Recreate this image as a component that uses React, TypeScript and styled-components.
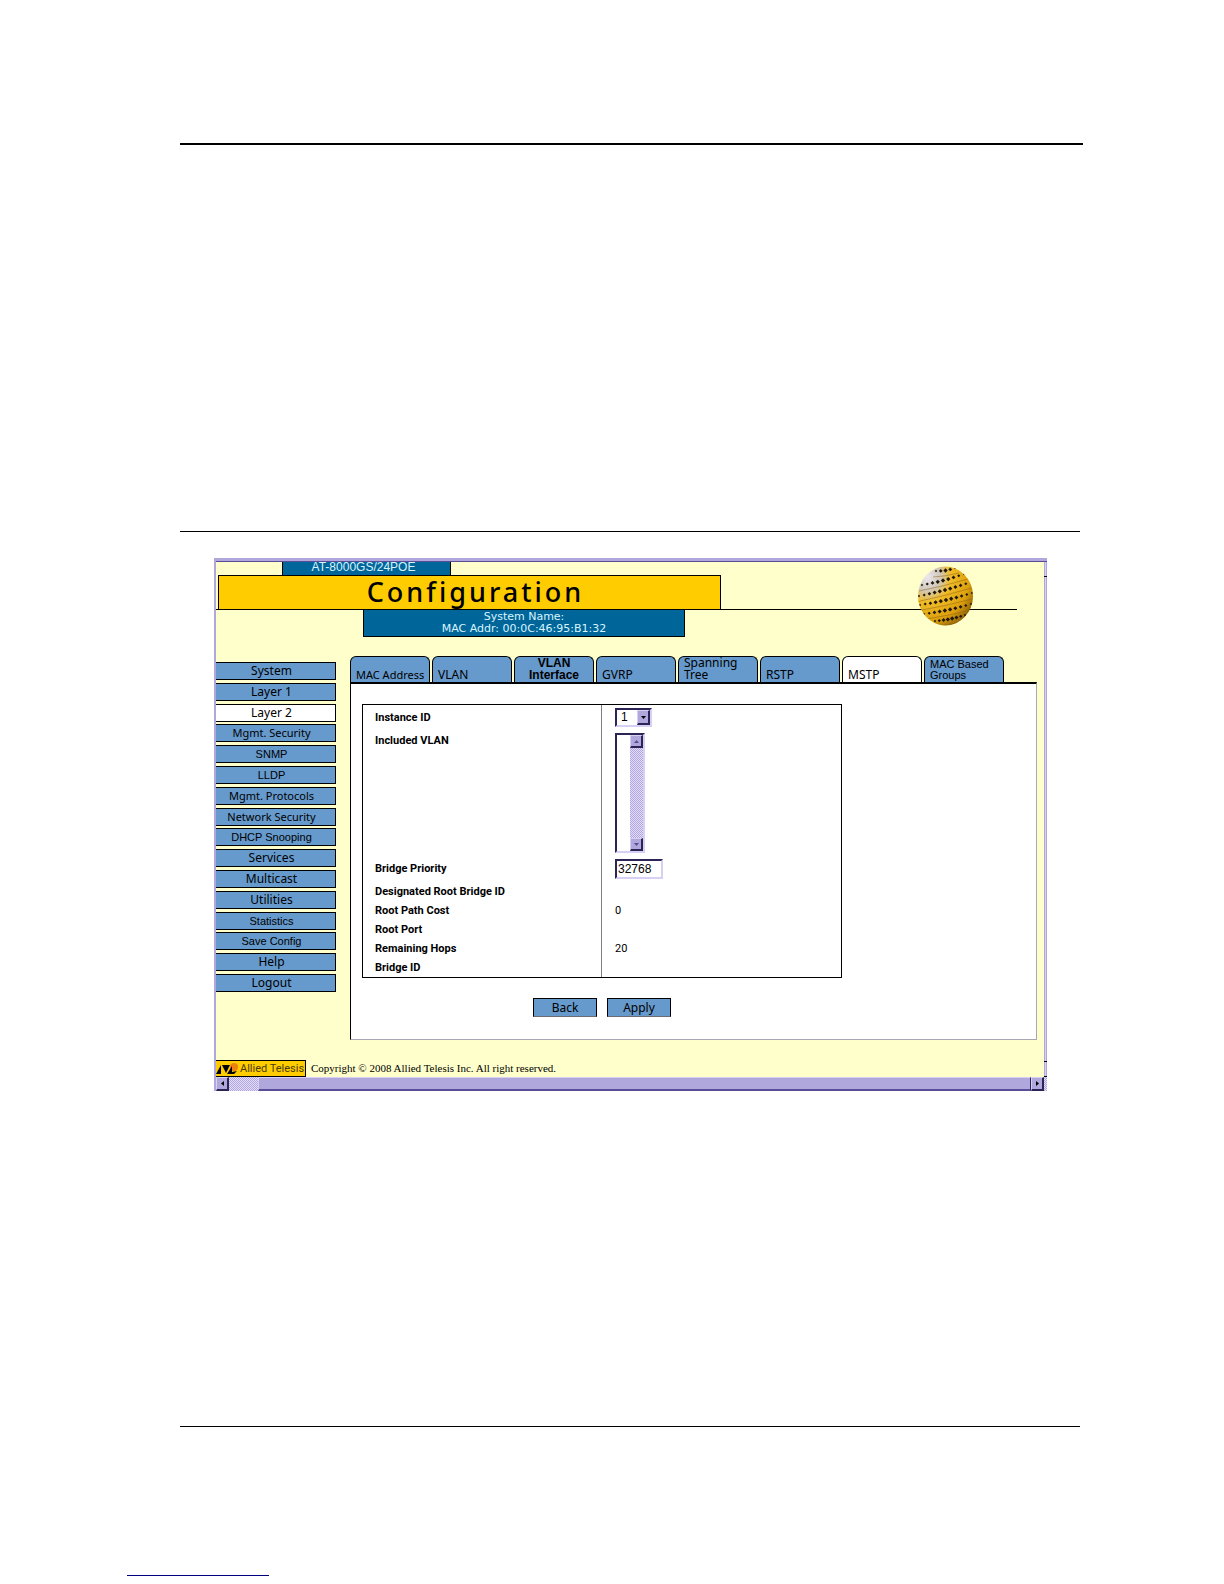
import React, { useState } from "react";
import styled, { createGlobalStyle, css } from "styled-components";

const color = {
  cream: "#ffffcc",
  gold: "#ffcc00",
  teal: "#006699",
  blue: "#6699cc",
  lilac: "#b0a8dc",
  lilacLight: "#d8d0f4",
  lilacDark: "#5a4c96",
  shadow: "#2c2454",
  paleText: "#d8f4ff",
};
const verdana = `"DejaVu Sans", Verdana, sans-serif`;
const humanist = `"Noto Sans", Verdana, sans-serif`;
const arial = `"Liberation Sans", Arial, sans-serif`;
const compact = `Roboto, "Liberation Sans", sans-serif`;

const GlobalStyle = createGlobalStyle`
  * { box-sizing: border-box; }
  body { margin: 0; background: #fff; color: #000; font-family: ${arial}; }
  button, input, select { font: inherit; color: inherit; border-radius: 0; margin: 0; }
`;

const Page = styled.div`
  padding: 143px 0 8px;
`;
const Rule = styled.hr`
  margin: 0 144px 0 180px;
  border: 0;
  height: 1px;
  background: #000;
`;
const TopRule = styled(Rule)`
  height: 2px;
  margin-right: 141px;
`;
const SectionRule = styled(Rule)`
  margin-top: 386px;
`;
const EndRule = styled(Rule)`
  margin-top: 335px;
`;
const Browser = styled.div`
  margin: 26px 177px 0 214px;
  border-top: 3px solid ${color.lilac};
  border-left: 2px solid ${color.lilac};
`;
const Viewport = styled.div`
  display: flex;
  border-top: 1px solid ${color.lilacDark};
`;
const Screen = styled.div`
  flex: 1;
  min-width: 0;
  background: ${color.cream};
`;
const SideScroll = styled.div`
  width: 3px;
  background: linear-gradient(90deg, ${color.lilac} 1px, ${color.lilacLight} 1px 2px, ${color.lilac} 2px);
  border-bottom: 1px solid #000;
  display: flex;
  flex-direction: column;
  justify-content: space-between;
  &::before {
    content: "";
    height: 14px;
    border-bottom: 1px solid #000;
  }
  &::after {
    content: "";
    height: 14px;
    border-top: 1px solid #000;
  }
`;

const Header = styled.header`
  position: relative;
  padding-right: 27px;
`;
const Model = styled.div`
  width: 169px;
  height: 13px;
  margin-left: 66px;
  padding-right: 6px;
  background: ${color.teal};
  border: solid #000;
  border-width: 0 1px;
  color: ${color.paleText};
  font-size: 12px;
  line-height: 10px;
  text-align: center;
`;
const TitleLine = styled.div`
  border-bottom: 1px solid #000;
`;
const Title = styled.h1`
  margin: 0 0 0 2px;
  width: 503px;
  height: 34px;
  padding-left: 12px;
  border: solid #000;
  border-width: 1px 1px 0;
  background: ${color.gold};
  font: 500 27px/32px ${humanist};
  letter-spacing: 3px;
  text-align: center;
`;
const SystemInfo = styled.div`
  width: 322px;
  height: 27px;
  margin-left: 147px;
  padding: 1px 0;
  border: solid #000;
  border-width: 0 1px 1px;
  background: ${color.teal};
  color: ${color.paleText};
  font: 11px/12px ${verdana};
  text-align: center;
`;
const Globe = styled.svg`
  position: absolute;
  right: 70px;
  top: 4px;
  width: 57px;
  height: 60px;
`;

const Body = styled.div`
  display: flex;
  gap: 14px;
  padding: 19px 7px 0 0;
  align-items: flex-start;
`;
const SideNav = styled.nav`
  flex: none;
  width: 120px;
  height: 330px;
  margin-top: 6px;
  display: flex;
  flex-direction: column;
  justify-content: space-between;
`;
type Face = "normal" | "long" | "arial";
const navFont: Record<Face, string> = {
  normal: `12px/16px ${humanist}`,
  long: `11px/16px ${humanist}`,
  arial: `11px/16px ${arial}`,
};
const NavLink = styled.a<{ $active?: boolean; $face: Face }>`
  height: 18px;
  padding-right: 8px;
  border: solid #000;
  border-width: 1px 1px 1px 0;
  background: ${(p) => (p.$active ? "#fff" : color.blue)};
  color: #000;
  font: ${(p) => navFont[p.$face]};
  text-align: center;
  text-decoration: none;
  white-space: nowrap;
`;

const Main = styled.div`
  flex: 1;
  min-width: 0;
`;
const Tabs = styled.nav`
  display: grid;
  grid-template-columns: repeat(8, 80px);
  gap: 2px;
`;
type TabFace = "normal" | "long" | "bold" | "arial";
const tabFont: Record<TabFace, string> = {
  normal: `12px/12px ${humanist}`,
  long: `11px/12px ${humanist}`,
  bold: `bold 12px/12px ${arial}`,
  arial: `11px/11px ${arial}`,
};
const Tab = styled.a<{ $active?: boolean; $face: TabFace }>`
  height: 26px;
  padding: 0 5px 1px;
  display: flex;
  align-items: flex-end;
  justify-content: ${(p) => (p.$face === "bold" ? "center" : "flex-start")};
  border: solid #000;
  border-width: 1px 1px 0;
  border-radius: 6px 6px 0 0;
  background: ${(p) => (p.$active ? "#fff" : color.blue)};
  color: #000;
  font: ${(p) => tabFont[p.$face]};
  text-align: ${(p) => (p.$face === "bold" ? "center" : "left")};
  text-decoration: none;
  white-space: pre;
`;
const Panel = styled.div`
  padding: 20px 12px 22px 11px;
  border: solid #a8a8b4;
  border-width: 2px 1px 1px;
  border-top-color: #000;
  border-left-color: #000;
  background: #fff;
`;
const Settings = styled.table`
  width: 480px;
  border: 1px solid #000;
  border-collapse: separate;
  border-spacing: 0;
  table-layout: fixed;
  font: 11px/14px ${compact};
`;
const Row = styled.tr<{ $h: number }>`
  height: ${(p) => p.$h}px;
`;
const Name = styled.th<{ $top?: boolean }>`
  width: 239px;
  padding: ${(p) => (p.$top ? "4px" : 0)} 0 0 12px;
  border-right: 1px solid #808080;
  text-align: left;
  vertical-align: ${(p) => (p.$top ? "top" : "middle")};
`;
const Value = styled.td`
  padding: 0 0 0 13px;
  vertical-align: middle;
`;

const sunken = css`
  border: 2px solid;
  border-color: ${color.shadow} ${color.lilacLight} ${color.lilacLight} ${color.shadow};
  background: #fff;
`;
const raised = css`
  border: solid;
  border-width: 1px 2px 2px 1px;
  border-color: ${color.lilacLight} ${color.shadow} ${color.shadow} ${color.lilacLight};
  background: ${color.lilac};
`;
const SelectBox = styled.div`
  ${sunken}
  position: relative;
  display: flex;
  width: 37px;
  height: 19px;
`;
const Select = styled.select`
  appearance: none;
  width: 100%;
  padding: 0 0 0 4px;
  border: 0;
  background: transparent;
  font: 12px/15px ${arial};
`;
const Arrow = styled.span`
  ${raised}
  position: absolute;
  right: 0;
  top: 0;
  bottom: 0;
  width: 13px;
  display: grid;
  place-items: center;
  pointer-events: none;
`;
const ListFrame = styled.div`
  ${sunken}
  display: flex;
  width: 30px;
  height: 120px;
`;
const List = styled.select`
  flex: 1;
  min-width: 0;
  height: 100%;
  padding: 0;
  border: 0;
  overflow: hidden;
  background: #fff;
`;
const dither = css`
  background: repeating-conic-gradient(${color.lilac} 0 25%, #e4dcfa 0 50%) 0 0 / 2px 2px;
`;
const ListScroll = styled.div`
  ${dither}
  width: 13px;
  display: flex;
  flex-direction: column;
  justify-content: space-between;
`;
const ScrollButton = styled.button<{ $muted?: boolean }>`
  ${raised}
  width: 13px;
  height: ${(p) => (p.$muted ? 13 : 14)}px;
  padding: 0;
  display: grid;
  place-items: center;
  fill: ${(p) => (p.$muted ? color.lilacDark : "#000")};
`;
const TextBox = styled.input`
  ${sunken}
  display: block;
  width: 48px;
  height: 20px;
  padding: 0 1px;
  font: 12px/16px ${arial};
`;
const Actions = styled.div`
  display: flex;
  gap: 10px;
  margin: 20px 0 0 171px;
`;
const Action = styled.button`
  width: 64px;
  height: 19px;
  padding: 0;
  border: 1px solid #000;
  border-bottom-color: #6c6c74;
  background: ${color.blue};
  font: 12px/15px ${humanist};
`;

const Footer = styled.footer`
  display: flex;
  align-items: center;
  gap: 5px;
  padding-top: 20px;
  font: 11px/15px "Liberation Serif", "Times New Roman", serif;
`;
const Brand = styled.div`
  display: flex;
  align-items: center;
  gap: 2px;
  width: 90px;
  height: 17px;
  border: solid #000;
  border-width: 1px 1px 1px 0;
  background: ${color.gold};
  color: #4a3a10;
  font: 11px/14px ${compact};
  white-space: nowrap;
`;
const BrandMark = styled.svg`
  flex: none;
  width: 22px;
  height: 14px;
`;
const BottomScroll = styled.div`
  ${dither}
  display: flex;
  height: 14px;
  padding-right: 3px;
`;
const Thumb = styled.div`
  flex: 1;
  margin-left: 29px;
  border: solid;
  border-width: 1px 1px 2px;
  border-color: ${color.lilacLight} ${color.shadow} ${color.lilacDark} ${color.lilacLight};
  background: ${color.lilac};
`;
const PageLink = styled.a`
  display: block;
  width: 142px;
  height: 1px;
  margin: 148px 0 0 127px;
  background: #000080;
`;

type Dir = "up" | "down" | "left" | "right";
const shapes: Record<Dir, string> = {
  up: "M0 4h5L2.5 1z",
  down: "M0 1h5L2.5 4z",
  left: "M4 0v5L1 2.5z",
  right: "M1 0v5l3-2.5z",
};
const Triangle = ({ dir }: { dir: Dir }) => (
  <svg width="5" height="5" viewBox="0 0 5 5" aria-hidden="true">
    <path d={shapes[dir]} />
  </svg>
);

/* Each band is a row of diamonds rising to the right across the ball. */
const bands = [
  { x1: 19, y1: 5, x2: 38, y2: 2, n: 5 },
  { x1: 5, y1: 19, x2: 47, y2: 8, n: 9 },
  { x1: 2, y1: 30, x2: 54, y2: 16, n: 11 },
  { x1: 3, y1: 39, x2: 55, y2: 27, n: 11 },
  { x1: 7, y1: 48, x2: 54, y2: 38, n: 10 },
  { x1: 18, y1: 55, x2: 48, y2: 49, n: 8 },
];
const GlobeArt = () => (
  <Globe viewBox="0 0 57 60" aria-hidden="true">
    <defs>
      <radialGradient id="ball" cx="18%" cy="18%" r="95%">
        <stop offset="0" stopColor="#ece8ee" />
        <stop offset="0.24" stopColor="#d0c8bc" />
        <stop offset="0.44" stopColor="#f0bc28" />
        <stop offset="0.78" stopColor="#dca00c" />
        <stop offset="1" stopColor="#8c6008" />
      </radialGradient>
      <clipPath id="ballEdge">
        <ellipse cx="28.5" cy="30" rx="27.5" ry="29.5" />
      </clipPath>
    </defs>
    <g clipPath="url(#ballEdge)">
      <rect width="57" height="60" fill="url(#ball)" />
      {bands.map((b) => (
        <g key={b.y1}>
          <path
            d={`M${b.x1 - 3} ${b.y1 + 6}Q${(b.x1 + b.x2) / 2} ${(b.y1 + b.y2) / 2 + 7} ${b.x2 + 4} ${b.y2 + 5}`}
            fill="none"
            stroke="#8a6014"
            strokeWidth="0.5"
          />
          {Array.from({ length: b.n }, (_, i) => {
            const t = i / (b.n - 1);
            const bulge = Math.sin(Math.PI * t);
            const cx = b.x1 + (b.x2 - b.x1) * t;
            const cy = b.y1 + (b.y2 - b.y1) * t + bulge;
            const r = 1.2 + bulge;
            return <path key={i} d={`M${cx - r} ${cy}l${r}-${r} ${r} ${r}-${r} ${r}z`} fill="#21170a" />;
          })}
        </g>
      ))}
    </g>
  </Globe>
);

const navItems: { text: string; face: Face }[] = [
  { text: "System", face: "normal" },
  { text: "Layer 1", face: "normal" },
  { text: "Layer 2", face: "normal" },
  { text: "Mgmt. Security", face: "long" },
  { text: "SNMP", face: "arial" },
  { text: "LLDP", face: "arial" },
  { text: "Mgmt. Protocols", face: "long" },
  { text: "Network Security", face: "long" },
  { text: "DHCP Snooping", face: "arial" },
  { text: "Services", face: "normal" },
  { text: "Multicast", face: "normal" },
  { text: "Utilities", face: "normal" },
  { text: "Statistics", face: "arial" },
  { text: "Save Config", face: "arial" },
  { text: "Help", face: "normal" },
  { text: "Logout", face: "normal" },
];
const tabs: { text: string; face: TabFace }[] = [
  { text: "MAC Address", face: "long" },
  { text: "VLAN", face: "normal" },
  { text: "VLAN\nInterface", face: "bold" },
  { text: "GVRP", face: "normal" },
  { text: "Spanning\nTree", face: "normal" },
  { text: "RSTP", face: "normal" },
  { text: "MSTP", face: "normal" },
  { text: "MAC Based\nGroups", face: "arial" },
];
const readings = [
  ["Designated Root Bridge ID", ""],
  ["Root Path Cost", "0"],
  ["Root Port", ""],
  ["Remaining Hops", "20"],
  ["Bridge ID", ""],
];

export default function App() {
  const [priority, setPriority] = useState("32768");
  return (
    <Page>
      <GlobalStyle />
      <TopRule />
      <SectionRule />
      <Browser>
        <Viewport>
          <Screen>
            <Header>
              <Model>AT-8000GS/24POE</Model>
              <TitleLine>
                <Title>Configuration</Title>
              </TitleLine>
              <SystemInfo>
                System Name:
                <br />
                MAC Addr: 00:0C:46:95:B1:32
              </SystemInfo>
              <GlobeArt />
            </Header>
            <Body>
              <SideNav aria-label="Sections">
                {navItems.map((item) => (
                  <NavLink key={item.text} href="#" $active={item.text === "Layer 2"} $face={item.face}>
                    {item.text}
                  </NavLink>
                ))}
              </SideNav>
              <Main>
                <Tabs aria-label="Layer 2 pages">
                  {tabs.map((t) => (
                    <Tab key={t.text} href="#" $face={t.face} $active={t.text === "MSTP"}>
                      {t.text}
                    </Tab>
                  ))}
                </Tabs>
                <Panel>
                  <Settings>
                    <tbody>
                      <Row $h={25}>
                        <Name scope="row">
                          <label htmlFor="instance">Instance ID</label>
                        </Name>
                        <Value>
                          <SelectBox>
                            <Select id="instance">
                              <option>1</option>
                            </Select>
                            <Arrow>
                              <Triangle dir="down" />
                            </Arrow>
                          </SelectBox>
                        </Value>
                      </Row>
                      <Row $h={126}>
                        <Name scope="row" $top>
                          <label htmlFor="vlans">Included VLAN</label>
                        </Name>
                        <Value>
                          <ListFrame>
                            <List id="vlans" size={8} multiple />
                            <ListScroll>
                              <ScrollButton type="button" aria-label="Scroll up" $muted>
                                <Triangle dir="up" />
                              </ScrollButton>
                              <ScrollButton type="button" aria-label="Scroll down" $muted>
                                <Triangle dir="down" />
                              </ScrollButton>
                            </ListScroll>
                          </ListFrame>
                        </Value>
                      </Row>
                      <Row $h={26}>
                        <Name scope="row">
                          <label htmlFor="priority">Bridge Priority</label>
                        </Name>
                        <Value>
                          <TextBox id="priority" value={priority} onChange={(e) => setPriority(e.target.value)} />
                        </Value>
                      </Row>
                      {readings.map(([name, value]) => (
                        <Row key={name} $h={19}>
                          <Name scope="row">{name}</Name>
                          <Value>{value}</Value>
                        </Row>
                      ))}
                    </tbody>
                  </Settings>
                  <Actions>
                    <Action type="button">Back</Action>
                    <Action type="button">Apply</Action>
                  </Actions>
                </Panel>
              </Main>
            </Body>
            <Footer>
              <Brand>
                <BrandMark viewBox="0 0 22 14" aria-hidden="true">
                  <circle cx="18" cy="5" r="4" fill="#f08010" />
                  <path d="M0 12 5 3v9zM6 3h8l-4 8zM11 12l5-8v6l5-1-3 3z" />
                </BrandMark>
                Allied Telesis
              </Brand>
              Copyright © 2008 Allied Telesis Inc. All right reserved.
            </Footer>
          </Screen>
          <SideScroll />
        </Viewport>
        <BottomScroll>
          <ScrollButton type="button" aria-label="Scroll left">
            <Triangle dir="left" />
          </ScrollButton>
          <Thumb />
          <ScrollButton type="button" aria-label="Scroll right">
            <Triangle dir="right" />
          </ScrollButton>
        </BottomScroll>
      </Browser>
      <EndRule />
      <PageLink href="#" aria-label="Next page" />
    </Page>
  );
}
